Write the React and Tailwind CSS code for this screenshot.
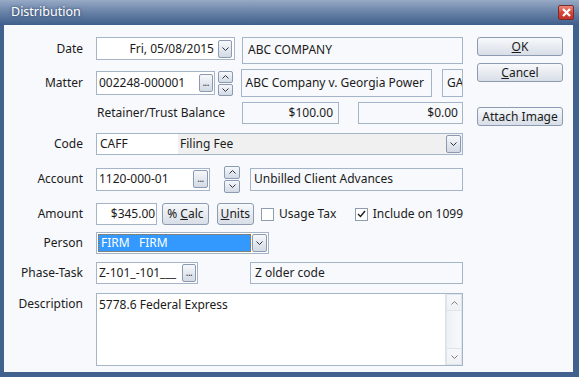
import React from "react";

const font = { fontFamily: '"Noto Sans", "Open Sans", sans-serif' };

// small chevron used in dropdown / spin buttons
const Chevron = ({ up = false }) => (
  <svg width="7" height="4" viewBox="0 0 7 4" className="block">
    <path
      d={up ? "M0.5 3.5 L3.5 0.5 L6.5 3.5" : "M0.5 0.5 L3.5 3.5 L6.5 0.5"}
      fill="none"
      stroke="#2b3340"
      strokeWidth="1"
    />
  </svg>
);

const MiniButton = ({ children, className = "" }) => (
  <div
    className={`flex items-center justify-center border border-[#8b9ab0] rounded-[2px] bg-gradient-to-b from-[#f6f8fb] to-[#d3dae4] ${className}`}
  >
    {children}
  </div>
);

const Dots = () => (
  <span className="text-[10px] leading-none text-[#2b3340] -mt-[3px] tracking-[-0.5px]">...</span>
);

const Label = ({ children, top = false }) => (
  <div
    className={`w-[79px] shrink-0 flex justify-end text-[12px] text-[#1b1b1b] ${
      top ? "items-start pt-[2px]" : "items-center h-full"
    }`}
  >
    {children}
  </div>
);

const ReadBox = ({ children, className = "" }) => (
  <div
    className={`border border-[#a6b4c7] bg-[#f7f9fc] flex items-center text-[12px] text-[#1b1b1b] overflow-hidden whitespace-nowrap ${className}`}
  >
    {children}
  </div>
);

const DialogButton = ({ children, className = "" }) => (
  <div
    className={`h-[19px] w-[86px] flex items-center justify-center border border-[#8c9bb2] rounded-[3px] bg-gradient-to-b from-[#f7f9fb] to-[#d8dee7] text-[12px] text-[#1b1b1b] ${className}`}
  >
    {children}
  </div>
);

const Spin = ({ className = "", half = "h-[13px]" }) => (
  <div className={`flex flex-col gap-px ${className}`}>
    <MiniButton className={`w-full ${half}`}>
      <Chevron up />
    </MiniButton>
    <MiniButton className={`w-full ${half}`}>
      <Chevron />
    </MiniButton>
  </div>
);

const Check = ({ checked }) => (
  <div className="w-[13px] h-[13px] border border-[#8f9db1] bg-white flex items-center justify-center shrink-0">
    {checked && (
      <svg width="9" height="8" viewBox="0 0 9 8">
        <path d="M1 4 L3.5 6.5 L8 1" fill="none" stroke="#1b1b1b" strokeWidth="1.4" />
      </svg>
    )}
  </div>
);

export default function App() {
  return (
    <div
      className="w-[579px] h-[377px] bg-[#41618e] flex flex-col select-none overflow-hidden"
      style={font}
    >
      {/* title bar */}
      <div className="h-[25px] shrink-0 flex items-center justify-between bg-gradient-to-b from-[#97aac6] via-[#6881a6] to-[#3f5f8c] pl-[11px] pr-[5px]">
        <span className="text-[12.5px] text-white [text-shadow:0_0_3px_#2a3f60]">Distribution</span>
        <div className="w-[16px] h-[15px] rounded-[2px] border border-[#7a2b2b] bg-gradient-to-b from-[#e9897b] via-[#d6473a] to-[#c0322a] flex items-center justify-center">
          <svg width="9" height="9" viewBox="0 0 9 9">
            <path d="M1 1 L8 8 M8 1 L1 8" stroke="white" strokeWidth="2.2" />
          </svg>
        </div>
      </div>

      {/* client area */}
      <div className="flex-1 ml-[4px] mr-[6px] mb-[5px] bg-[#f7f9fc] flex">
        <div className="w-[459px] pt-[12px] flex flex-col">
          {/* Date */}
          <div className="h-[27px] flex items-start">
            <div className="h-[23px] flex">
              <Label>Date</Label>
            </div>
            <div className="ml-[13px] w-[139px] h-[23px] border border-[#a6b4c7] bg-white flex items-center justify-end pr-[2px] text-[12px] text-[#1b1b1b]">
              <span className="mr-[4px]">Fri, 05/08/2015</span>
              <MiniButton className="w-[14px] h-[18px]">
                <Chevron />
              </MiniButton>
            </div>
            <ReadBox className="ml-[7px] w-[221px] h-[27px] items-start pt-[3px] pl-[5px]">ABC COMPANY</ReadBox>
          </div>

          {/* Matter */}
          <div className="mt-[5px] h-[28px] flex items-center">
            <Label>Matter</Label>
            <div className="ml-[13px] w-[119px] h-[24px] border border-[#a6b4c7] bg-white flex items-center justify-between pl-[2px] pr-[1px] text-[12px] text-[#1b1b1b]">
              <span>002248-000001</span>
              <MiniButton className="w-[14px] h-[18px]">
                <Dots />
              </MiniButton>
            </div>
            <Spin className="ml-[3px] w-[15px]" half="h-[12px]" />
            <ReadBox className="ml-[8px] w-[192px] h-[28px] pl-[4px] -mt-px">ABC Company v. Georgia Power</ReadBox>
            <ReadBox className="ml-[10px] w-[21px] h-[28px] pl-[4px] -mt-px">GA</ReadBox>
          </div>

          {/* Retainer */}
          <div className="mt-[5px] h-[22px] flex items-center">
            <div className="w-[92px] shrink-0" />
            <div className="w-[146px] shrink-0 text-[12px] text-[#1b1b1b] whitespace-nowrap pl-[1px]">
              Retainer/Trust Balance
            </div>
            <ReadBox className="w-[97px] h-[22px] justify-end pr-[5px]">$100.00</ReadBox>
            <ReadBox className="ml-[19px] w-[105px] h-[22px] justify-end pr-[4px]">$0.00</ReadBox>
          </div>

          {/* Code */}
          <div className="mt-[9px] h-[22px] flex items-center">
            <Label>Code</Label>
            <div className="ml-[13px] w-[367px] h-[22px] border border-[#a6b4c7] bg-white flex items-stretch text-[12px] text-[#1b1b1b]">
              <div className="w-[81px] pl-[3px] flex items-center">CAFF</div>
              <div className="flex-1 bg-[#f0f0f0] pl-[2px] flex items-center">Filing Fee</div>
              <div className="bg-[#f0f0f0] flex items-center pr-[1px]">
                <MiniButton className="w-[15px] h-[18px]">
                  <Chevron />
                </MiniButton>
              </div>
            </div>
          </div>

          {/* Account */}
          <div className="mt-[10px] h-[28px] flex items-center">
            <Label>Account</Label>
            <div className="ml-[13px] w-[114px] h-[23px] border border-[#a6b4c7] bg-white flex items-center justify-between pl-[2px] pr-[1px] text-[12px] text-[#1b1b1b]">
              <span>1120-000-01</span>
              <MiniButton className="w-[15px] h-[18px]">
                <Dots />
              </MiniButton>
            </div>
            <Spin className="ml-[14px] w-[16px]" half="h-[13px]" />
            <ReadBox className="ml-[10px] w-[213px] h-[23px] pl-[3px]">Unbilled Client Advances</ReadBox>
          </div>

          {/* Amount */}
          <div className="mt-[10px] h-[22px] flex items-center">
            <Label>Amount</Label>
            <div className="ml-[13px] w-[62px] h-[22px] border border-[#a6b4c7] bg-white flex items-center justify-end pr-[1px] text-[12px] text-[#1b1b1b]">
              $345.00
            </div>
            <div className="ml-[5px] w-[47px] h-[22px] flex items-center justify-center border border-[#8c9bb2] rounded-[3px] bg-gradient-to-b from-[#f7f9fb] to-[#d8dee7] text-[12px] text-[#1b1b1b]">
              %&nbsp;<span className="underline">C</span>alc
            </div>
            <div className="ml-[8px] w-[38px] h-[22px] flex items-center justify-center border border-[#8c9bb2] rounded-[3px] bg-gradient-to-b from-[#f7f9fb] to-[#d8dee7] text-[12px] text-[#1b1b1b]">
              <span className="underline">U</span>nits
            </div>
            <div className="ml-[7px] w-[95px] flex items-center gap-[5px] text-[12px] text-[#1b1b1b]">
              <Check />
              <span>Usage Tax</span>
            </div>
            <div className="flex items-center gap-[5px] text-[12px] text-[#1b1b1b] whitespace-nowrap">
              <Check checked />
              <span>Include on 1099</span>
            </div>
          </div>

          {/* Person */}
          <div className="mt-[7px] h-[22px] flex items-center">
            <Label>Person</Label>
            <div className="ml-[13px] w-[173px] h-[22px] border border-[#a6b4c7] bg-white flex items-center p-px gap-px">
              <div className="flex-1 h-full bg-[#3399ff] border border-dotted border-[#c76b00] flex items-center pl-[2px] text-[12px] text-white whitespace-pre">
                FIRM   FIRM
              </div>
              <MiniButton className="w-[15px] h-[18px]">
                <Chevron />
              </MiniButton>
            </div>
          </div>

          {/* Phase-Task */}
          <div className="mt-[8px] h-[22px] flex items-center">
            <Label>Phase-Task</Label>
            <div className="ml-[13px] w-[102px] h-[22px] border border-[#a6b4c7] bg-white flex items-center justify-between pl-[2px] pr-[1px] text-[12px] text-[#1b1b1b]">
              <span>Z-101_-101___</span>
              <MiniButton className="w-[14px] h-[18px]">
                <Dots />
              </MiniButton>
            </div>
            <ReadBox className="ml-[52px] w-[213px] h-[22px] pl-[4px]">Z older code</ReadBox>
          </div>

          {/* Description */}
          <div className="mt-[9px] h-[73px] flex items-start">
            <Label top>Description</Label>
            <div className="ml-[13px] w-[367px] h-[73px] border border-[#a6b4c7] bg-white flex text-[12px] text-[#1b1b1b]">
              <div className="flex-1 pl-[2px] pt-[2px]">5778.6 Federal Express</div>
              <div className="w-[17px] h-full flex flex-col bg-[#f0f2f5] border-l border-[#dde3ea]">
                <div className="h-[17px] border border-[#d5dce5] bg-gradient-to-b from-[#fbfcfd] to-[#eef1f5] flex items-center justify-center opacity-60">
                  <Chevron up />
                </div>
                <div className="flex-1 border-x border-[#dfe5ec] bg-gradient-to-r from-[#eef1f5] to-[#f8f9fb]" />
                <div className="h-[17px] border border-[#d5dce5] bg-gradient-to-b from-[#fbfcfd] to-[#eef1f5] flex items-center justify-center opacity-60">
                  <Chevron />
                </div>
              </div>
            </div>
          </div>
        </div>

        {/* buttons column */}
        <div className="ml-[14px] pt-[12px] flex flex-col">
          <DialogButton>
            <span className="underline">O</span>K
          </DialogButton>
          <DialogButton className="mt-[7px]">
            <span className="underline">C</span>ancel
          </DialogButton>
          <DialogButton className="mt-[25px]">Attach Image</DialogButton>
        </div>
      </div>
    </div>
  );
}
